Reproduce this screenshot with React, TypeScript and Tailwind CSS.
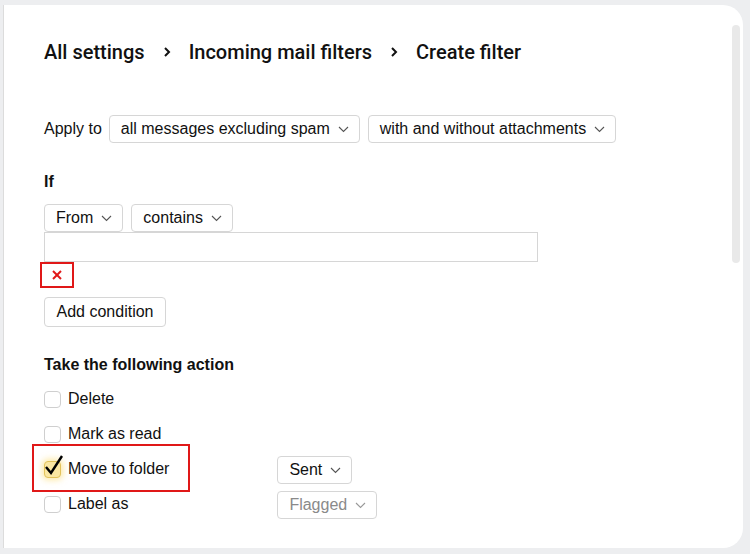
import React from "react";

const Chevron = ({ color = "#555" }: { color?: string }) => (
  <svg width="11" height="7" viewBox="0 0 11 7" className="ml-[8px] shrink-0">
    <polyline points="1,1 5.5,5.5 10,1" fill="none" stroke={color} strokeWidth="1.1" />
  </svg>
);

const Select = ({ label, muted = false, className = "" }: { label: string; muted?: boolean; className?: string }) => (
  <div
    className={
      "h-[28px] flex items-center border border-[#d6d6d6] rounded-[4px] pl-[11px] pr-[10px] bg-white text-[16px] " +
      (muted ? "text-[#8a8a8a] " : "text-[#111] ") +
      className
    }
  >
    <span>{label}</span>
    <Chevron color={muted ? "#999" : "#555"} />
  </div>
);

const Check = ({ label }: { label: string }) => (
  <div className="flex items-center h-[18px]">
    <div className="w-[17px] h-[17px] border border-[#cfcfcf] rounded-[4px] bg-white" />
    <span className="ml-[7px] text-[16px] text-[#111]">{label}</span>
  </div>
);

const Crumb = () => (
  <svg width="8" height="12" viewBox="0 0 8 12" className="mx-[18px] shrink-0">
    <polyline points="2,2 6,6 2,10" fill="none" stroke="#111" strokeWidth="2" />
  </svg>
);

export default function App() {
  return (
    <div
      className="w-[750px] h-[554px] bg-[#edeef0] pt-[5px] pl-[3px] pr-[7px] pb-[6px] overflow-hidden"
      style={{ fontFamily: '"Liberation Sans", Arial, sans-serif' }}
    >
      <div className="relative h-full bg-white rounded-tr-[20px] rounded-br-[20px] border-l border-[#dcdcdc] pl-[40px] pt-[35px]">
        <div className="absolute top-[20px] right-[3px] w-[8px] h-[238px] rounded-full bg-[#e9e9e9]" />

        <div
          className="flex items-center h-[24px] text-[20px] text-[#111] font-medium"
          style={{ fontFamily: 'Roboto, "Noto Sans", sans-serif' }}
        >
          <span>All settings</span>
          <Crumb />
          <span>Incoming mail filters</span>
          <Crumb />
          <span>Create filter</span>
        </div>

        <div className="flex items-center mt-[51px]">
          <span className="text-[16px] text-[#111] mr-[7px]">Apply to</span>
          <Select label="all messages excluding spam" />
          <Select label="with and without attachments" className="ml-[8px]" />
        </div>

        <div className="mt-[30px] text-[16px] font-bold text-[#111] leading-[18px]">If</div>

        <div className="flex mt-[13px]">
          <Select label="From" />
          <Select label="contains" className="ml-[8px]" />
        </div>
        <div className="w-[494px] h-[30px] border border-[#d6d6d6] bg-white" />
        <div className="-ml-[4px] w-[34px] h-[26px] border-2 border-[#e01818] flex items-center justify-center">
          <svg width="10" height="10" viewBox="0 0 10 10">
            <line x1="1" y1="1" x2="9" y2="9" stroke="#e01818" strokeWidth="2" />
            <line x1="9" y1="1" x2="1" y2="9" stroke="#e01818" strokeWidth="2" />
          </svg>
        </div>
        <div className="mt-[9px] w-[122px] h-[30px] border border-[#d6d6d6] rounded-[4px] flex items-center justify-center text-[16px] text-[#111]">
          Add condition
        </div>

        <div className="mt-[29px] text-[16px] font-bold text-[#111] leading-[18px]">Take the following action</div>

        <div className="flex mt-[16px]">
          <div className="flex flex-col">
            <Check label="Delete" />
            <div className="mt-[17px]">
              <Check label="Mark as read" />
            </div>
            <div className="relative mt-[17px] flex items-center h-[18px]">
              <div className="absolute -left-[12px] -top-[16px] w-[158px] h-[48px] border-2 border-[#e01818]" />
              <div className="relative w-[17px] h-[17px] border border-[#e2c25a] rounded-[4px] bg-[#fbe7a2] shadow-[0_0_6px_2px_rgba(252,215,95,0.55)]">
                <svg width="20" height="22" viewBox="0 0 20 22" className="absolute -left-[1px] -top-[8px]">
                  <polyline points="2,13 7,19 18,2" fill="none" stroke="#000" strokeWidth="2.4" strokeLinejoin="miter" />
                </svg>
              </div>
              <span className="ml-[7px] text-[16px] text-[#111]">Move to folder</span>
            </div>
            <div className="mt-[17px]">
              <Check label="Label as" />
            </div>
          </div>
          <div className="ml-[108px] mt-[66px] flex flex-col gap-[7px] items-start">
            <Select label="Sent" />
            <Select label="Flagged" muted />
          </div>
        </div>
      </div>
    </div>
  );
}
